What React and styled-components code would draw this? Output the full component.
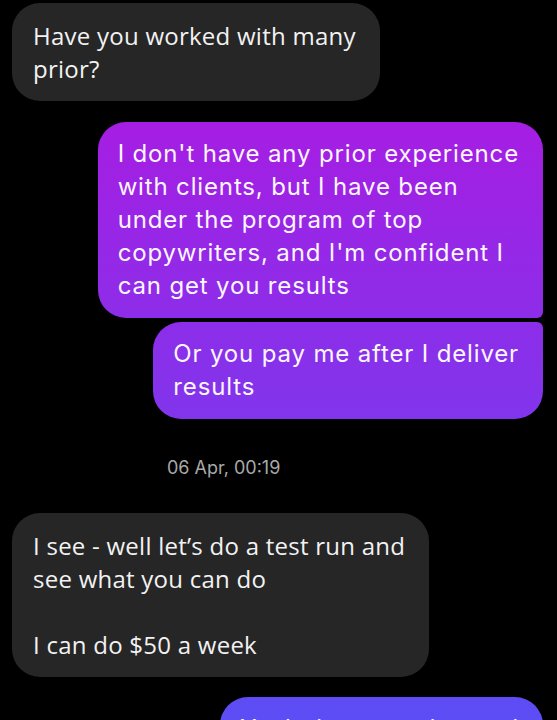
import React from "react";
import styled, { createGlobalStyle, css } from "styled-components";

const Global = createGlobalStyle`
  html, body { margin: 0; padding: 0; background: #000; }
  body { font-family: "Open Sans", Roboto, "Liberation Sans", sans-serif; overflow: hidden; }
`;

const Thread = styled.div`
  display: flex;
  flex-direction: column;
  padding: 3px 14px 0 12px;
  height: 720px;
  box-sizing: border-box;
  overflow: hidden;
`;

const Group = styled.div`
  display: flex;
  flex-direction: column;
  align-items: ${(p) => (p.$mine ? "flex-end" : "flex-start")};
  gap: 4px;
  margin-top: ${(p) => p.$gap || 0}px;
`;

const Bubble = styled.div`
  width: fit-content;
  box-sizing: border-box;
  padding: 16px 24px 16px 21px;
  border-radius: 28px;
  font-family: "Open Sans", Roboto, sans-serif;
  font-size: 24px;
  letter-spacing: 0.25px;
  line-height: 33px;
  white-space: nowrap;
  color: #f2f2f2;
  background: #262626;
  ${(p) =>
    p.$mine &&
    css`
      font-family: Inter, Roboto, sans-serif;
      font-size: 24px;
      letter-spacing: 0.85px;
      color: #fbf6ff;
      padding: 15px 24px 16px 20px;
      background: linear-gradient(180deg, #b414df 0px, #5c4df5 720px);
      background-attachment: fixed;
      line-height: 33px;
    `}
  ${(p) => p.$tail === "bottom" && css`border-bottom-right-radius: 6px;`}
  ${(p) => p.$tail === "top" && css`border-top-right-radius: 6px;`}
`;

const Stamp = styled.div`
  margin: 38px 0 0 155px;
  font-family: Inter, Roboto, sans-serif;
  font-size: 18px;
  line-height: 22px;
  color: #a9a9a9;
`;

export default function App() {
  return (
    <>
      <Global />
      <Thread>
        <Group>
          <Bubble>
            Have you worked with many
            <br />
            prior?
          </Bubble>
        </Group>
        <Group $mine $gap={21}>
          <Bubble $mine $tail="bottom">
            I don't have any prior experience
            <br />
            with clients, but I have been
            <br />
            under the program of top
            <br />
            copywriters, and I'm confident I
            <br />
            can get you results
          </Bubble>
          <Bubble $mine $tail="top">
            Or you pay me after I deliver
            <br />
            results
          </Bubble>
        </Group>
        <Stamp>06 Apr, 00:19</Stamp>
        <Group $gap={34}>
          <Bubble>
            I see - well let’s do a test run and
            <br />
            see what you can do
            <br />
            <br />I can do $50 a week
          </Bubble>
        </Group>
        <Group $mine $gap={20}>
          <Bubble $mine>Yeah that sounds good</Bubble>
        </Group>
      </Thread>
    </>
  );
}
